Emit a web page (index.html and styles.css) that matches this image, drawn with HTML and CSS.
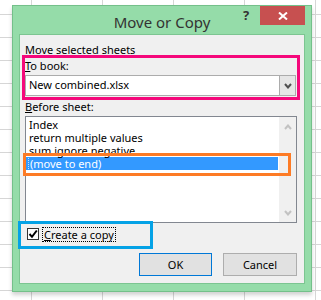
FILE: index.html
```html
<!DOCTYPE html>
<html>
<head>
<meta charset="utf-8">
<link rel="stylesheet" href="styles.css">
</head>
<body>
<div class="dialog">
  <div class="titlebar">
    <div class="title">Move or Copy</div>
    <div class="help">?</div>
    <div class="close">
      <svg width="10" height="8" viewBox="0 0 10 8"><path d="M1 0.5 L9 7.5 M9 0.5 L1 7.5" stroke="#fff" stroke-width="2" fill="none"/></svg>
    </div>
  </div>
  <div class="client">
    <div class="label l1">Move selected sheets</div>
    <div class="label l2"><u>T</u>o book:</div>
    <div class="combo">
      <div class="combo-text">New combined.xlsx</div>
      <div class="combo-btn">
        <svg width="8" height="6" viewBox="0 0 8 6"><path d="M1 1 L4 4.5 L7 1" stroke="#505050" stroke-width="2" fill="none"/></svg>
      </div>
    </div>
    <div class="label l3"><u>B</u>efore sheet:</div>
    <div class="list">
      <div class="items">
        <div class="item">Index</div>
        <div class="item">return multiple values</div>
        <div class="item">sum ignore negative</div>
        <div class="item sel"><span class="focus">(move to end)</span></div>
      </div>
      <div class="scroll">
        <svg width="8" height="6" viewBox="0 0 8 6"><path d="M1 5 L4 1.5 L7 5" stroke="#c2c2c2" stroke-width="2" fill="none"/></svg>
        <svg width="8" height="6" viewBox="0 0 8 6"><path d="M1 1 L4 4.5 L7 1" stroke="#c2c2c2" stroke-width="2" fill="none"/></svg>
      </div>
    </div>
    <div class="check-row">
      <span class="cb">
        <svg width="10" height="10" viewBox="0 0 10 10"><path d="M1.5 5 L4 7.8 L8.8 1.5" stroke="#000" stroke-width="2" fill="none"/></svg>
      </span>
      <span class="cb-label"><u>C</u>reate a copy</span>
    </div>
    <div class="buttons">
      <div class="btn ok">OK</div>
      <div class="btn">Cancel</div>
    </div>
  </div>
</div>
<div class="mark mark-pink"></div>
<div class="mark mark-orange"></div>
<div class="mark mark-blue"></div>
</body>
</html>
```
FILE: styles.css
```css
* { box-sizing: border-box; }
html, body { margin: 0; padding: 0; }
body {
  width: 321px;
  height: 300px;
  overflow: hidden;
  position: relative;
  font-family: "Noto Sans", "Open Sans", sans-serif;
  font-size: 11px;
  color: #000;
  background-color: #fff;
  background-image:
    linear-gradient(to right, #d6d6d6 1px, transparent 1px),
    linear-gradient(to bottom, #d6d6d6 1px, transparent 1px);
  background-size: 71px 23px;
  background-position: 31px 14px;
  padding-top: 5px;
  padding-left: 12px;
}
.dialog {
  width: 300px;
  height: 287px;
  background: #95dca9;
  border: 1px solid #74c08a;
  padding: 0 6px 7px 6px;
  display: flex;
  flex-direction: column;
  box-shadow: 0 3px 4px rgba(0,0,0,0.18);
}
.titlebar {
  height: 28px;
  display: flex;
  align-items: flex-start;
  padding-left: 69px;
}
.title {
  flex: 1;
  text-align: center;
  font-size: 15px;
  line-height: 28px;
  padding-top: 2px;
  color: #333;
}
.help {
  width: 20px;
  height: 19px;
  text-align: center;
  font-weight: bold;
  font-size: 13px;
  line-height: 18px;
  color: #333;
  margin-right: 4px;
}
.close {
  width: 45px;
  height: 19px;
  background: #c75050;
  display: flex;
  align-items: center;
  justify-content: center;
}
.client {
  flex: 1;
  background: #f0f0f0;
  border: 1px solid #7cc591;
  margin: 0 -6px 0 0;
  width: 286px;
  margin-left: 0;
  padding: 8px 6px 0 5px;
  display: flex;
  flex-direction: column;
}
.label {
  height: 13px;
  line-height: 13px;
  white-space: nowrap;
}
.l2 { margin-top: 3px; }
.l3 { margin-top: 4px; }
.combo {
  margin-top: 3px;
  height: 21px;
  width: 271px;
  border: 1px solid #acacac;
  background: #fff;
  display: flex;
}
.combo-text {
  flex: 1;
  padding-left: 3px;
  line-height: 17px;
}
.combo-btn {
  width: 16px;
  border-left: 1px solid #acacac;
  background: #e6e6e6;
  display: flex;
  align-items: center;
  justify-content: center;
}
.list {
  margin-top: 3px;
  height: 107px;
  width: 272px;
  border: 1px solid #828790;
  background: #fff;
  display: flex;
}
.items {
  flex: 1;
  padding-top: 1px;
}
.item {
  height: 13px;
  line-height: 13px;
  padding-left: 3px;
  white-space: nowrap;
}
.item.sel {
  background: #3399ff;
  color: #fff;
  margin-right: 1px;
  padding-left: 2px;
}
.focus {
  display: inline-block;
  height: 13px;
  line-height: 11px;
  border: 1px dotted rgba(255,255,255,0.7);
  border-top: none;
  border-right: none;
  border-bottom: none;
  padding-left: 1px;
}
.scroll {
  width: 17px;
  background: #f0f0f0;
  display: flex;
  flex-direction: column;
  justify-content: space-between;
  align-items: center;
  padding: 7px 0 6px 0;
}
.check-row {
  margin-top: 5px;
  height: 14px;
  display: flex;
  align-items: flex-start;
}
.cb {
  width: 12px;
  height: 12px;
  margin-left: 2px;
  border: 1px solid #333;
  background: #fff;
  display: flex;
  align-items: center;
  justify-content: center;
}
.cb-label {
  margin-left: 3px;
  margin-top: -1px;
  border: 1px dotted #000;
  padding: 0 1px;
  line-height: 13px;
  height: 15px;
}
.buttons {
  margin-top: 11px;
  display: flex;
  justify-content: flex-end;
  gap: 11px;
  padding-right: 1px;
}
.btn {
  width: 74px;
  height: 23px;
  border: 1px solid #adadad;
  background: #e1e1e1;
  text-align: center;
  line-height: 21px;
}
.btn.ok {
  width: 73px;
  border-color: #0078d7;
}
.mark {
  position: absolute;
  border: 3px solid;
}
.mark-pink {
  left: 22px; top: 55px; width: 278px; height: 45px;
  border-color: #f5087b;
}
.mark-orange {
  left: 23px; top: 153px; width: 268px; height: 23px;
  border-color: #fd7b25;
}
.mark-blue {
  left: 18px; top: 221px; width: 135px; height: 28px;
  border-color: #04a2e6;
}
```
